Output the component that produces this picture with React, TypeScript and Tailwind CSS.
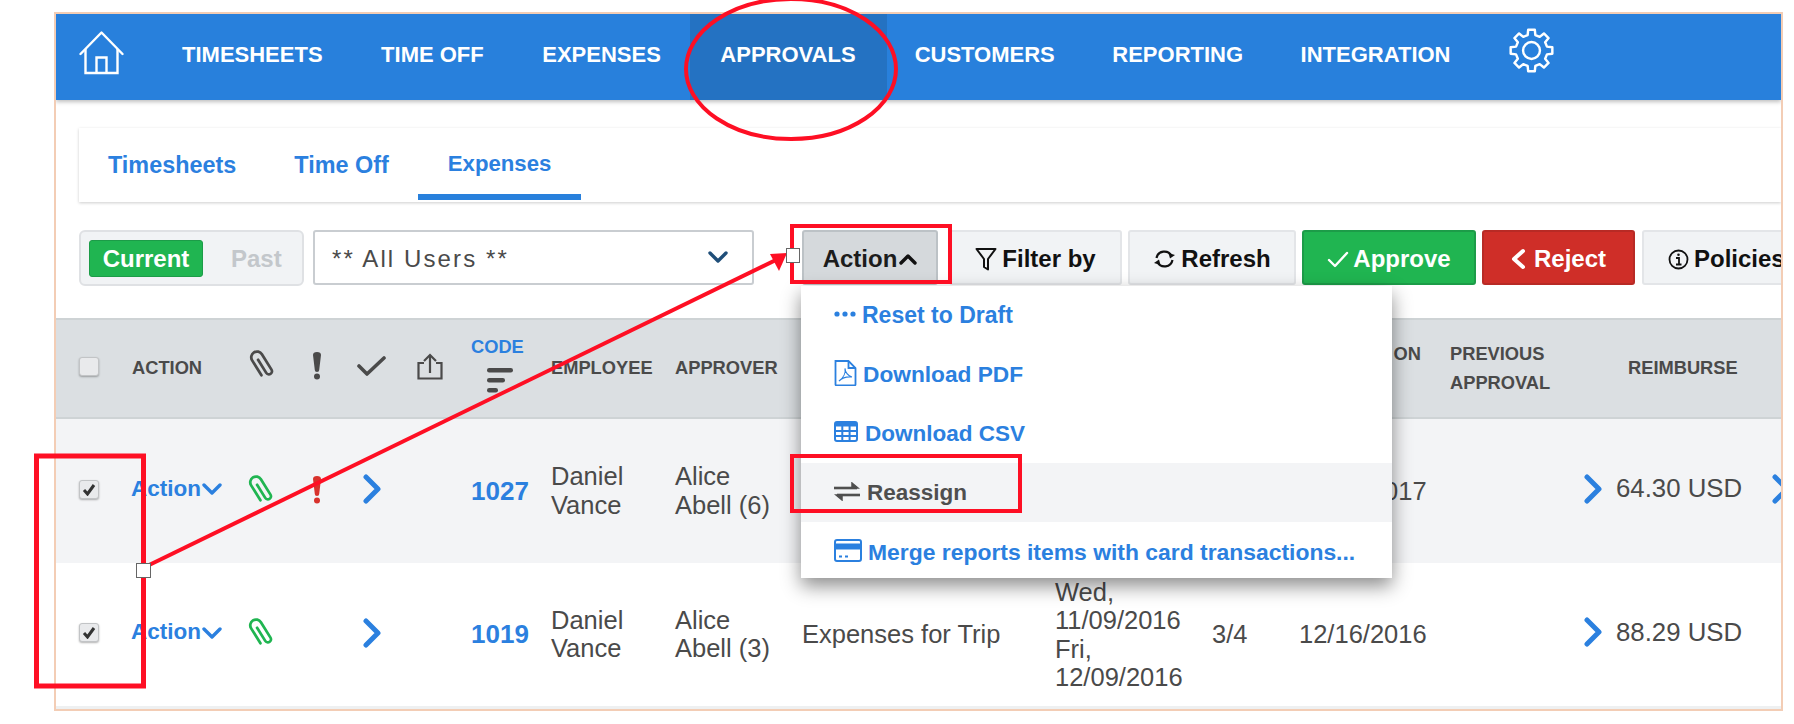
import React from "react";

const BLUE = "#2b80df";
const GRID =
  "grid grid-cols-[53px_116px_64px_45px_60px_54px_80px_124px_127px_253px_157px_87px_151px_133px_188px_20px] items-center pl-[23px] w-[1725px]";

function gearPath() {
  const cx = 24, cy = 24, ro = 22.5, ri = 17;
  const pts: string[] = [];
  for (let i = 0; i < 8; i++) {
    const a = (i * 45 - 90) * (Math.PI / 180);
    const d = (v: number) => (v * Math.PI) / 180;
    const p = (r: number, off: number) =>
      `${(cx + r * Math.cos(a + d(off))).toFixed(2)} ${(cy + r * Math.sin(a + d(off))).toFixed(2)}`;
    pts.push(p(ri, -14), p(ro, -9), p(ro, 9), p(ri, 14));
  }
  return "M" + pts.join("L") + "Z";
}

function Clip({ color }: { color: string }) {
  return (
    <svg width="30" height="33" viewBox="-14 -15.5 28 31" fill="none" stroke={color} strokeWidth="2.6" strokeLinecap="round">
      <path transform="rotate(-32)" d="M.5 -6V8.5a2.9 2.9 0 0 0 5.8 0V-8.5a5.4 5.4 0 0 0 -10.8 0V8" />
    </svg>
  );
}

function Bang({ color }: { color: string }) {
  return (
    <svg width="10" height="28" viewBox="0 0 10 28" fill={color}>
      <path d="M1 3a4 3 0 0 1 8 0L7.2 18a2.2 2 0 0 1 -4.4 0Z" />
      <circle cx="5" cy="24.6" r="3" />
    </svg>
  );
}

function ChevRight() {
  return (
    <svg width="20" height="30" viewBox="0 0 20 30" fill="none" stroke={BLUE} strokeWidth="5" strokeLinecap="round" strokeLinejoin="round">
      <path d="M4 3L16 15L4 27" />
    </svg>
  );
}

function Box({ checked }: { checked?: boolean }) {
  return (
    <div className="flex h-[19px] w-[20px] items-center justify-center rounded-[3px] border border-[#c2c4c6] bg-[#e9eaec] shadow-[0_1px_2px_rgba(0,0,0,0.3)]">
      {checked && (
        <svg width="14" height="13" viewBox="0 0 14 13" fill="none" stroke="#333" strokeWidth="3">
          <path d="M2 7L5.5 11L12 2" />
        </svg>
      )}
    </div>
  );
}

function RowAction() {
  return (
    <div className="mb-[4px] ml-[-1px] flex items-center text-[22.5px] font-bold text-[#2b80df]">
      <span>Action</span>
      <svg className="ml-[1px]" width="20" height="12" viewBox="0 0 20 12" fill="none" stroke={BLUE} strokeWidth="3.4" strokeLinecap="round" strokeLinejoin="round">
        <path d="M2 2L10 10L18 2" />
      </svg>
    </div>
  );
}

function Row({ bg, h, code, approver, bang, report, dates, items, submitted, amount, more }: {
  bg: string; h: string; code: string; approver: string; bang?: boolean; report?: string;
  dates?: string[]; items?: string; submitted: string; amount: string; more?: boolean;
}) {
  return (
    <div className={`${GRID} ${bg} ${h} text-[25.5px] leading-[28.5px] text-[#4a4a4a]`}>
      <div className="mb-[4px]"><Box checked /></div>
      <RowAction />
      <div className="mb-[2px] ml-[-3px]"><Clip color="#20b551" /></div>
      <div className="mb-[2px]">{bang && <Bang color="#d8322c" />}</div>
      <div className="mb-[4px] ml-[5px]"><ChevRight /></div>
      <div />
      <div className="text-[26px] font-bold text-[#2b80df]">{code}</div>
      <div className="mb-[1px]">Daniel<br />Vance</div>
      <div className="mb-[1px]">{approver.split("|").map((t) => <div key={t}>{t}</div>)}</div>
      <div>{report}</div>
      <div>{dates?.map((d) => <div key={d}>{d}</div>)}</div>
      <div>{items}</div>
      <div>{submitted}</div>
      <div />
      <div className="mb-[5px] flex items-center gap-[13px] text-[25.8px]">
        <ChevRight />
        <span>{amount}</span>
      </div>
      <div className="mb-[4px]">{more && <ChevRight />}</div>
    </div>
  );
}

function Btn({ w, children, className }: { w: string; children: React.ReactNode; className: string }) {
  return (
    <div className={`flex h-[55px] shrink-0 items-center justify-center rounded-[3px] border-2 pt-[3px] text-[24px] font-bold ${w} ${className}`}>
      {children}
    </div>
  );
}

function MenuItem({ icon, label, className }: { icon: React.ReactNode; label: string; className: string }) {
  return (
    <div className={`flex h-[59px] items-center pl-[33px] font-bold ${className}`}>
      {icon}
      <span>{label}</span>
    </div>
  );
}

export default function App() {
  return (
    <div className="relative h-[724px] w-[1794px] overflow-hidden bg-white font-['Liberation_Sans',sans-serif]">
      <div className="ml-[54px] mt-[12px] h-[699px] w-[1729px] overflow-hidden border-2 border-[#f3cdb5] bg-white">
        {/* top navigation */}
        <nav className="relative z-10 flex h-[86px] items-stretch bg-[#2880dc] text-[22px] font-bold text-white shadow-[0_2px_4px_rgba(0,0,0,0.25)]">
          <div className="ml-[23px] mr-[29px] flex items-center">
            <svg className="mb-[8px]" width="45" height="44" viewBox="0 0 44 44" fill="none" stroke="white" strokeWidth="2.4">
              <path d="M1 23L22 1.5L43 23" strokeLinejoin="round" strokeLinecap="round" />
              <path d="M6 18V42H38V18" />
              <path d="M17 42V26.5H27V42" />
            </svg>
          </div>
          {["TIMESHEETS", "TIME OFF", "EXPENSES"].map((t) => (
            <div key={t} className="flex items-center pb-[6px] pl-[29px] pr-[29.5px]">{t}</div>
          ))}
          <div className="flex items-center bg-[#2472c2] pb-[6px] pl-[30px] pr-[31px]">APPROVALS</div>
          {["CUSTOMERS", "REPORTING", "INTEGRATION"].map((t) => (
            <div key={t} className="flex items-center pb-[6px] pl-[28px] pr-[29.5px]">{t}</div>
          ))}
          <div className="ml-[28px] flex items-center">
            <svg className="mb-[14px]" width="47" height="45" viewBox="0 0 48 48" fill="none" stroke="white" strokeWidth="2.6" strokeLinejoin="round">
              <path d={gearPath()} />
              <circle cx="24" cy="24" r="9" />
            </svg>
          </div>
        </nav>

        {/* tabs */}
        <div className="ml-[23px] mt-[28px] flex h-[74px] bg-white pb-[2px] text-[23.4px] font-bold text-[#2b80df] shadow-[0_1px_3px_rgba(0,0,0,0.2)]">
          <div className="flex items-center px-[29px] pt-[3px]">Timesheets</div>
          <div className="flex items-center px-[29px] pt-[3px]">Time Off</div>
          <div className="flex items-center border-b-[6px] border-[#2880dc] px-[30px] pt-[5px] text-[22.2px]">Expenses</div>
        </div>

        {/* toolbar */}
        <div className="ml-[23px] mt-[28px] flex h-[57px] items-start">
          <div className="flex h-[56px] w-[225px] shrink-0 items-center rounded-[6px] border-2 border-[#dfe1e4] bg-[#f1f3f5] pl-[8px] text-[24px] font-bold">
            <div className="flex h-[37px] w-[114px] items-center justify-center rounded-[3px] border border-[#1c9c48] bg-[#20b551] pt-[1px] text-white">Current</div>
            <div className="ml-[28px] pt-[1px] text-[#c3c7cb]">Past</div>
          </div>
          <div className="ml-[9px] flex h-[55px] w-[441px] shrink-0 items-center justify-between rounded-[3px] border-2 border-[#c9cdd1] bg-white pl-[17px] pr-[24px] pt-[2px] text-[24px] tracking-[2.1px] text-[#4a4a4a]">
            <span>** All Users **</span>
            <svg className="mb-[2px]" width="20" height="13" viewBox="0 0 20 13" fill="none" stroke="#1f4e79" strokeWidth="3.4" strokeLinecap="round" strokeLinejoin="round">
              <path d="M2 2L10 10L18 2" />
            </svg>
          </div>

          <div className="relative ml-[48px] shrink-0">
            <Btn w="w-[136px]" className="border-[#bcc2c6] bg-[#d5d9dc] text-[#1c1c1c]">
              <span>Action</span>
              <svg className="ml-[2px]" width="18" height="12" viewBox="0 0 18 12" fill="none" stroke="#111" strokeWidth="3.4" strokeLinecap="round" strokeLinejoin="round">
                <path d="M2 10L9 3L16 10" />
              </svg>
            </Btn>
            {/* dropdown menu */}
            <div className="absolute left-[-1px] top-[56px] z-20 h-[292px] w-[591px] overflow-hidden bg-white shadow-[0_8px_18px_rgba(0,0,0,0.45)]">
              <MenuItem
                className="text-[23px] text-[#2b80df]"
                label="Reset to Draft"
                icon={
                  <svg className="mr-[6px] mb-[4px]" width="22" height="6" viewBox="0 0 22 6" fill={BLUE}>
                    <circle cx="3" cy="3" r="2.6" /><circle cx="11" cy="3" r="2.6" /><circle cx="19" cy="3" r="2.6" />
                  </svg>
                }
              />
              <MenuItem
                className="text-[22.7px] text-[#2b80df]"
                label="Download PDF"
                icon={
                  <svg className="mr-[6px] mb-[4px]" width="23" height="26" viewBox="0 0 23 26" fill="none" stroke={BLUE} strokeWidth="1.8">
                    <path d="M1.5 1H14.5L21.5 8V24.5a.8.8 0 0 1 -.8 .8H2.3a.8.8 0 0 1 -.8 -.8Z" />
                    <path d="M14.5 1V8H21.5" />
                    <path d="M5 21C9 18 12 13 11 8.5C11 12 14 16 18 17C13 16.5 8 18 5 21Z" strokeWidth="1.2" />
                  </svg>
                }
              />
              <MenuItem
                className="pt-[1px] text-[22.5px] text-[#2b80df]"
                label="Download CSV"
                icon={
                  <svg className="mr-[7px] mb-[6px]" width="24" height="21" viewBox="0 0 24 21" fill="none" stroke={BLUE} strokeWidth="2">
                    <rect x="1" y="1" width="22" height="19" rx="2" />
                    <path d="M1 3.5H23" strokeWidth="4" />
                    <path d="M1 10H23M1 15H23M8.3 4V20M15.6 4V20" />
                  </svg>
                }
              />
              <MenuItem
                className="bg-[#f3f4f6] pt-[1px] text-[22.5px] text-[#4f4f4f]"
                label="Reassign"
                icon={
                  <svg className="mr-[7px] mb-[3px]" width="26" height="19" viewBox="0 0 26 19" fill="none" stroke="#4f4f4f" strokeWidth="2.6">
                    <path d="M0 6H23" />
                    <path d="M18 1L24 6L18 6Z" fill="#4f4f4f" strokeWidth="1.5" />
                    <path d="M26 13H3" />
                    <path d="M8 18L2 13L8 13Z" fill="#4f4f4f" strokeWidth="1.5" />
                  </svg>
                }
              />
              <MenuItem
                className="pt-[1px] text-[22.9px] text-[#2b80df]"
                label="Merge reports items with card transactions..."
                icon={
                  <svg className="mr-[6px] mb-[3px]" width="28" height="23" viewBox="0 0 28 23" fill="none" stroke={BLUE} strokeWidth="2">
                    <rect x="1" y="1" width="26" height="21" rx="2" />
                    <path d="M1 7.5H27" strokeWidth="6" />
                    <path d="M5 17.5H8M11 17.5H14" />
                  </svg>
                }
              />
            </div>
          </div>

          <Btn w="w-[173px] ml-[11px]" className="border-[#e3e5e8] bg-[#f1f3f5] text-[#111]">
            <svg className="mr-[5px]" width="22" height="24" viewBox="0 0 22 24" fill="none" stroke="#111" strokeWidth="2" strokeLinejoin="round">
              <path d="M1.5 2H20.5L13 12V22.5L9 20V12Z" />
            </svg>
            Filter by
          </Btn>
          <Btn w="w-[168px] ml-[6px]" className="border-[#e3e5e8] bg-[#f1f3f5] text-[#111]">
            <svg className="mr-[5px]" width="23" height="20" viewBox="0 0 23 20" fill="none" stroke="#111" strokeWidth="2.2">
              <path d="M3.5 9A8 8 0 0 1 18.5 7" />
              <path d="M19.5 11A8 8 0 0 1 4.5 13" />
              <path d="M22 6L17 9.5L15.5 4Z" fill="#111" stroke="none" />
              <path d="M1 14L6 10.5L7.5 16Z" fill="#111" stroke="none" />
            </svg>
            Refresh
          </Btn>
          <Btn w="w-[174px] ml-[6px]" className="border-[#1c9c48] bg-[#20b551] text-white">
            <svg className="mr-[4px]" width="22" height="17" viewBox="0 0 22 17" fill="none" stroke="white" strokeWidth="2.4" strokeLinecap="round" strokeLinejoin="round">
              <path d="M2 9L8 15L20 2" />
            </svg>
            Approve
          </Btn>
          <Btn w="w-[153px] ml-[6px]" className="border-[#b82a25] bg-[#cf2e28] text-white">
            <svg className="mr-[8px]" width="15" height="22" viewBox="0 0 15 22" fill="none" stroke="white" strokeWidth="4" strokeLinecap="round" strokeLinejoin="round">
              <path d="M12 3L3 11L12 19" />
            </svg>
            Reject
          </Btn>
          <Btn w="w-[160px] ml-[7px] justify-start overflow-hidden pl-[24px]" className="border-[#e3e5e8] bg-[#f1f3f5] text-[#111]">
            <svg className="mr-[5px] shrink-0" width="21" height="21" viewBox="0 0 21 21" fill="none" stroke="#111" strokeWidth="1.8">
              <circle cx="10.5" cy="10.5" r="9" />
              <path d="M8 9H11V15.5M8 15.5H13.5" />
              <circle cx="10.5" cy="5.8" r="1.3" fill="#111" stroke="none" />
            </svg>
            Policies
          </Btn>
        </div>

        {/* table */}
        <div className="mt-[31px]">
          <div className={`${GRID} h-[101px] border-y-2 border-[#ced3d5] bg-[#dbdfe2] pb-[2px] text-[18.3px] font-bold leading-[29px] text-[#4a4a4a]`}>
            <div className="mb-[2px]"><Box /></div>
            <div>ACTION</div>
            <div className="mb-[4px] ml-[-2px]">
              <Clip color="#4a4a4a" />
            </div>
            <div className="mb-[4px]"><Bang color="#4a4a4a" /></div>
            <div className="mb-[4px]">
              <svg width="29" height="22" viewBox="0 0 29 22" fill="none" stroke="#4a4a4a" strokeWidth="3.6" strokeLinecap="round" strokeLinejoin="round">
                <path d="M2 11L10 19L27 3" />
              </svg>
            </div>
            <div className="mb-[2px]">
              <svg width="26" height="27" viewBox="0 0 26 27" fill="none" stroke="#4a4a4a" strokeWidth="2.2">
                <path d="M7 10H1.5V25.5H24.5V10H19" />
                <path d="M13 20V2" />
                <path d="M7 8L13 2L19 8" />
              </svg>
            </div>
            <div className="mb-[6px] flex flex-col">
              <span className="text-[#2b80df] leading-[22px]">CODE</span>
              <svg className="ml-[15px] mt-[10px]" width="28" height="25" viewBox="0 0 28 25" fill="#4a4a4a">
                <rect x="1" y="0" width="26" height="4.4" rx="2.2" />
                <rect x="1" y="10" width="18" height="4.4" rx="2.2" />
                <rect x="1" y="20" width="11" height="4.4" rx="2.2" />
              </svg>
            </div>
            <div>EMPLOYEE</div>
            <div>APPROVER</div>
            <div />
            <div />
            <div />
            <div className="mb-[29px] flex justify-end whitespace-nowrap pr-[29px]">SUBMITTED ON</div>
            <div>PREVIOUS<br />APPROVAL</div>
            <div className="pl-[45px]">REIMBURSE</div>
            <div />
          </div>
          <Row
            bg="bg-[#f3f4f6]"
            h="h-[144px]"
            code="1027"
            approver="Alice|Abell (6)"
            bang
            submitted="01/16/2017"
            amount="64.30 USD"
            more
          />
          <Row
            bg="bg-white"
            h="h-[143px]"
            code="1019"
            approver="Alice|Abell (3)"
            report="Expenses for Trip"
            dates={["Wed,", "11/09/2016", "Fri,", "12/09/2016"]}
            items="3/4"
            submitted="12/16/2016"
            amount="88.29 USD"
          />
          <div className="h-[3px] bg-[#eef0f1]" />
        </div>
      </div>

      {/* annotations drawn over the screenshot */}
      <svg className="pointer-events-none absolute left-0 top-0 z-30" width="1794" height="724" viewBox="0 0 1794 724" fill="none">
        <ellipse cx="791" cy="69" rx="105" ry="70" stroke="#fe0f24" strokeWidth="4" />
        <rect x="792" y="226" width="158" height="56" stroke="#fe0f24" strokeWidth="4" />
        <rect x="792" y="456" width="228" height="55" stroke="#fe0f24" strokeWidth="4" />
        <rect x="36.5" y="456" width="107" height="230" stroke="#fe0f24" strokeWidth="5" />
        <path d="M143 568L782 257" stroke="#fe0f24" strokeWidth="4" />
        <path d="M770 254L787 253L779 271Z" fill="#fe0f24" />
        <rect x="786.5" y="248.5" width="13" height="14" fill="white" stroke="#666" strokeWidth="1" />
        <rect x="136.5" y="563.5" width="14" height="14" fill="white" stroke="#666" strokeWidth="1" />
      </svg>
    </div>
  );
}
